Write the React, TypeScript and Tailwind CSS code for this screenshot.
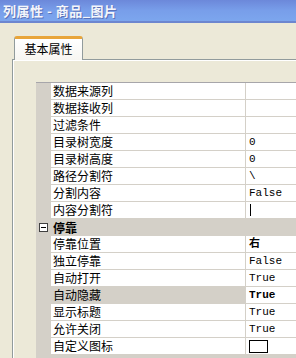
import React from "react";

type Row =
  | { kind: "prop"; name: string; value?: React.ReactNode; bold?: boolean; selected?: boolean }
  | { kind: "cat"; name: string };

const cjk = "font-['Noto_Sans_CJK_SC',sans-serif]";
const mono = "font-['Liberation_Mono','Noto_Sans_CJK_SC',monospace]";

const rows: Row[] = [
  { kind: "prop", name: "数据来源列" },
  { kind: "prop", name: "数据接收列" },
  { kind: "prop", name: "过滤条件" },
  { kind: "prop", name: "目录树宽度", value: "0" },
  { kind: "prop", name: "目录树高度", value: "0" },
  { kind: "prop", name: "路径分割符", value: "\\" },
  { kind: "prop", name: "分割内容", value: "False" },
  {
    kind: "prop",
    name: "内容分割符",
    value: <span className="mt-[2px] ml-[1px] inline-block h-[12px] w-px bg-black align-top" />,
  },
  { kind: "cat", name: "停靠" },
  { kind: "prop", name: "停靠位置", value: "右", bold: true },
  { kind: "prop", name: "独立停靠", value: "False" },
  { kind: "prop", name: "自动打开", value: "True" },
  { kind: "prop", name: "自动隐藏", value: "True", bold: true, selected: true },
  { kind: "prop", name: "显示标题", value: "True" },
  { kind: "prop", name: "允许关闭", value: "True" },
  {
    kind: "prop",
    name: "自定义图标",
    value: <span className="mt-[2px] inline-block h-[13px] w-[19px] border border-black bg-white align-top" />,
  },
  { kind: "cat", name: "外观" },
];

function MinusBox() {
  return (
    <span className="flex h-[9px] w-[9px] items-center justify-center border border-[#404040] bg-white">
      <span className="h-px w-[5px] bg-black" />
    </span>
  );
}

function GridRow({ row }: { row: Row }) {
  if (row.kind === "cat") {
    return (
      <div className="flex h-[17px] bg-[#d4d0c8]">
        <div className="flex w-[15px] items-center justify-center">
          <MinusBox />
        </div>
        <div className={`pl-[2px] text-[12px] leading-[17px] font-bold text-black ${cjk}`}>{row.name}</div>
      </div>
    );
  }
  return (
    <div className="flex h-[17px]">
      <div className="w-[15px] bg-[#d4d0c8]" />
      <div
        className={`w-[195px] border-r border-b border-[#d4d0c8] pl-[2px] text-[12px] leading-[16px] text-black ${cjk} ${
          row.selected ? "bg-[#d4d0c8]" : "bg-white"
        }`}
      >
        {row.name}
      </div>
      <div
        className={`flex-1 border-b border-[#d4d0c8] bg-white pl-[3px] text-[11px] leading-[16px] text-black ${mono} ${
          row.bold ? "font-bold" : ""
        }`}
      >
        {row.value}
      </div>
    </div>
  );
}

export default function App() {
  return (
    <div className="relative h-[358px] w-[296px] overflow-hidden bg-[#ece9d8]">
      {/* title bar */}
      <div className="flex h-[23px] items-center border-b-2 border-[#6d86cf] bg-linear-to-b from-[#6c88da] via-[#789eea] to-[#7ca6ee] pl-[3px]">
        <span
          className={`text-[13px] leading-[20px] font-bold tracking-[0.5px] whitespace-pre text-[#f4f6fc] ${cjk} [text-shadow:1px_1px_0_#5a72b8]`}
        >
          列属性 - 商品_图片
        </span>
      </div>

      {/* tab strip */}
      <div className="mt-[13px] flex pl-[14px]">
        <div
          className={`relative z-10 -mb-[1px] flex h-[24px] w-[69px] items-center justify-center rounded-t-[3px] border-x border-t-[3px] border-x-[#919b9c] border-t-[#e8a53a] bg-linear-to-b from-white to-[#f7f6f1] pb-[1px] text-[12px] text-black ${cjk}`}
        >
          基本属性
        </div>
      </div>

      {/* tab page */}
      <div className="ml-[12px] h-[400px] w-[320px] border-t border-l border-[#919b9c] bg-[#ece9d8]">
        <div className="h-full border-t border-l border-white pt-[21px] pl-[22px]">
          <div className="w-[300px] border-t border-[#a7a6aa]">
            {rows.map((r, i) => (
              <GridRow key={i} row={r} />
            ))}
          </div>
        </div>
      </div>
    </div>
  );
}
